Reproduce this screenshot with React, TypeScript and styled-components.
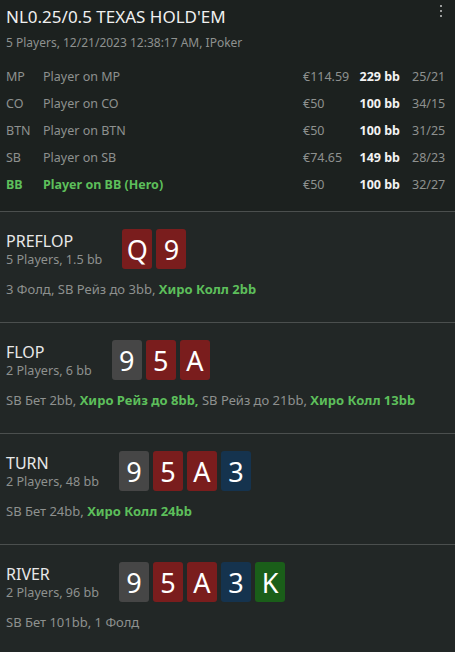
import React from "react";
import styled, { createGlobalStyle } from "styled-components";

type Seat = {
  pos: string;
  name: string;
  stack: string;
  bb: string;
  stats: string;
  hero?: boolean;
};

type Action = { text: string; hero?: boolean };

type Street = {
  name: string;
  info: string;
  cards: { rank: string; suit: "s" | "h" | "d" | "c" }[];
  actions: Action[];
};

const seats: Seat[] = [
  { pos: "MP", name: "Player on MP", stack: "€114.59", bb: "229 bb", stats: "25/21" },
  { pos: "CO", name: "Player on CO", stack: "€50", bb: "100 bb", stats: "34/15" },
  { pos: "BTN", name: "Player on BTN", stack: "€50", bb: "100 bb", stats: "31/25" },
  { pos: "SB", name: "Player on SB", stack: "€74.65", bb: "149 bb", stats: "28/23" },
  { pos: "BB", name: "Player on BB (Hero)", stack: "€50", bb: "100 bb", stats: "32/27", hero: true },
];

const streets: Street[] = [
  {
    name: "PREFLOP",
    info: "5 Players, 1.5 bb",
    cards: [
      { rank: "Q", suit: "h" },
      { rank: "9", suit: "h" },
    ],
    actions: [{ text: "3 Фолд, SB Рейз до 3bb, " }, { text: "Хиро Колл 2bb", hero: true }],
  },
  {
    name: "FLOP",
    info: "2 Players, 6 bb",
    cards: [
      { rank: "9", suit: "s" },
      { rank: "5", suit: "h" },
      { rank: "A", suit: "h" },
    ],
    actions: [
      { text: "SB Бет 2bb, " },
      { text: "Хиро Рейз до 8bb,", hero: true },
      { text: " SB Рейз до 21bb, " },
      { text: "Хиро Колл 13bb", hero: true },
    ],
  },
  {
    name: "TURN",
    info: "2 Players, 48 bb",
    cards: [
      { rank: "9", suit: "s" },
      { rank: "5", suit: "h" },
      { rank: "A", suit: "h" },
      { rank: "3", suit: "d" },
    ],
    actions: [{ text: "SB Бет 24bb, " }, { text: "Хиро Колл 24bb", hero: true }],
  },
  {
    name: "RIVER",
    info: "2 Players, 96 bb",
    cards: [
      { rank: "9", suit: "s" },
      { rank: "5", suit: "h" },
      { rank: "A", suit: "h" },
      { rank: "3", suit: "d" },
      { rank: "K", suit: "c" },
    ],
    actions: [{ text: "SB Бет 101bb, 1 Фолд" }],
  },
];

const suitColors = {
  s: "#464646",
  h: "#7a1d1d",
  d: "#15334e",
  c: "#1a5e19",
};

const GlobalStyle = createGlobalStyle`
  body {
    margin: 0;
    background: #222726;
    font-family: "Noto Sans", "Open Sans", sans-serif;
    color: #e6e6e6;
  }
`;

const Page = styled.div`
  width: 455px;
  min-height: 652px;
  background: #222726;
`;

const Header = styled.div`
  position: relative;
  background: #1c211f;
  padding: 6px 8px 13px 6px;
  border-bottom: 1px solid #4b4f4e;
`;

const Title = styled.div`
  font-size: 17px;
  line-height: 22px;
  color: #f0f0f0;
`;

const SubTitle = styled.div`
  margin-top: 6px;
  font-size: 12px;
  line-height: 18px;
  color: #8e918f;
`;

const Menu = styled.div`
  position: absolute;
  top: 5px;
  right: 13px;
  display: flex;
  flex-direction: column;
  gap: 3px;
  span {
    width: 2px;
    height: 2px;
    background: #9a9c9b;
  }
`;

const SeatTable = styled.div`
  margin-top: 11px;
  display: grid;
  grid-template-columns: 37px 1fr 54px 43px 47px;
  grid-auto-rows: 27px;
  align-items: center;
  font-size: 12.5px;
`;

const Cell = styled.div<{ $hero?: boolean; $bright?: boolean; $right?: boolean }>`
  color: ${(p) => (p.$hero ? "#5dbf5b" : p.$bright ? "#f2f2f2" : "#8e918f")};
  font-weight: ${(p) => (p.$hero || p.$bright ? 700 : 400)};
  text-align: ${(p) => (p.$right ? "right" : "left")};
  white-space: nowrap;
`;

const StatCell = styled(Cell)`
  padding-left: 12px;
`;

const StreetBlock = styled.div`
  padding: 17px 6px 0;
  height: 111px;
  box-sizing: border-box;
  border-bottom: 1px solid #4b4f4e;
  &:last-child {
    border-bottom: none;
  }
`;

const StreetTop = styled.div`
  display: flex;
  align-items: center;
  gap: 20px;
`;

const StreetLabel = styled.div`
  display: flex;
  flex-direction: column;
`;

const StreetName = styled.div`
  font-size: 16px;
  line-height: 21px;
  color: #e8e8e8;
`;

const StreetInfo = styled.div`
  font-size: 12.6px;
  line-height: 16px;
  color: #8e918f;
`;

const Cards = styled.div`
  display: flex;
  gap: 4px;
`;

const Card = styled.div<{ $suit: keyof typeof suitColors }>`
  width: 30px;
  height: 40px;
  border-radius: 3px;
  background: ${(p) => suitColors[p.$suit]};
  color: #ffffff;
  font-size: 27px;
  display: flex;
  align-items: center;
  justify-content: center;
`;

const Actions = styled.div`
  margin-top: 11px;
  font-size: 13px;
  color: #8e918f;
  white-space: nowrap;
`;

const ActionText = styled.span<{ $hero?: boolean }>`
  color: ${(p) => (p.$hero ? "#5dbf5b" : "#8e918f")};
  font-weight: ${(p) => (p.$hero ? 700 : 400)};
`;

const App: React.FC = () => {
  return (
    <Page>
      <GlobalStyle />
      <Header>
        <Title>NL0.25/0.5 TEXAS HOLD'EM</Title>
        <SubTitle>5 Players, 12/21/2023 12:38:17 AM, IPoker</SubTitle>
        <Menu>
          <span />
          <span />
          <span />
        </Menu>
        <SeatTable>
          {seats.map((s) => (
            <React.Fragment key={s.pos}>
              <Cell $hero={s.hero}>{s.pos}</Cell>
              <Cell $hero={s.hero}>{s.name}</Cell>
              <Cell>{s.stack}</Cell>
              <Cell $bright $right>
                {s.bb}
              </Cell>
              <StatCell>{s.stats}</StatCell>
            </React.Fragment>
          ))}
        </SeatTable>
      </Header>
      {streets.map((st) => (
        <StreetBlock key={st.name}>
          <StreetTop>
            <StreetLabel>
              <StreetName>{st.name}</StreetName>
              <StreetInfo>{st.info}</StreetInfo>
            </StreetLabel>
            <Cards>
              {st.cards.map((c, i) => (
                <Card key={i} $suit={c.suit}>
                  {c.rank}
                </Card>
              ))}
            </Cards>
          </StreetTop>
          <Actions>
            {st.actions.map((a, i) => (
              <ActionText key={i} $hero={a.hero}>
                {a.text}
              </ActionText>
            ))}
          </Actions>
        </StreetBlock>
      ))}
    </Page>
  );
};

export default App;
